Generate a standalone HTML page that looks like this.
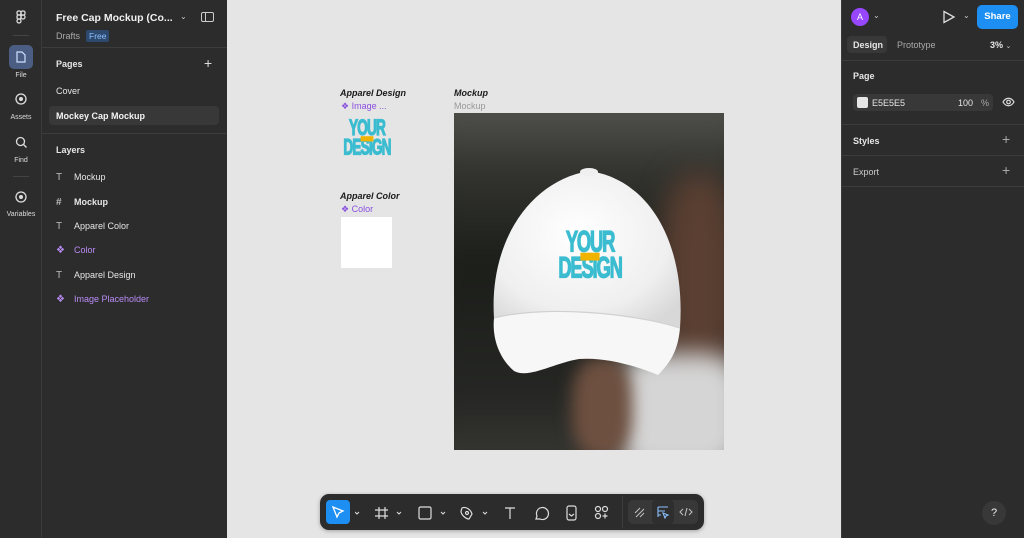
<!DOCTYPE html>
<html><head><style>
*{margin:0;padding:0;box-sizing:border-box}
body{width:1024px;height:538px;overflow:hidden;font-family:"Liberation Sans",sans-serif;background:#e5e5e5;position:relative;font-size:9px;color:#e6e6e6}
.a{position:absolute}
.rail{left:0;top:0;width:42px;height:538px;background:#2c2c2c;border-right:1px solid #3a3a3a}
.lp{left:42px;top:0;width:185px;height:538px;background:#2c2c2c}
.rp{left:841px;top:0;width:183px;height:538px;background:#2c2c2c;border-left:1px solid #3a3a3a}
.sep{height:1px;background:#3c3c3c}
.b{font-weight:bold}
.lbl{font-size:7px;color:#ddd;text-align:center;width:42px;left:0}
.ly{left:56px;font-size:9px}
.ly span{position:absolute;left:18px;top:0;white-space:nowrap}
.ly i{font-style:normal;color:#bbb;font-size:10px}
.purple{color:#b98cf5}
.yd{font-weight:bold;color:#3bbcd0;text-align:center;transform-origin:center top;-webkit-text-stroke:1px #3bbcd0}
</style></head><body>
<div class="a rail"></div>
<svg class="a" style="left:15px;top:10px" width="12" height="16" viewBox="0 0 12 16" fill="none" stroke="#ddd" stroke-width="1.3"><rect x="2" y="1" width="4" height="4" rx="1.5"/><rect x="6" y="1" width="4" height="4" rx="1.5"/><rect x="2" y="5" width="4" height="4" rx="1.5"/><circle cx="8" cy="7" r="2"/><rect x="2" y="9" width="4" height="4" rx="2"/></svg>
<div class="a" style="left:13px;top:35px;width:16px;height:1px;background:#444"></div>
<div class="a" style="left:9px;top:45px;width:24px;height:24px;background:#4b5d82;border-radius:5px"></div>
<svg class="a" style="left:16px;top:51px" width="10" height="12" viewBox="0 0 10 12" fill="none" stroke="#cfe0ff" stroke-width="1.2"><path d="M1 1h5l3 3v7H1z"/></svg>
<div class="a lbl" style="top:72px">File</div>
<svg class="a" style="left:15px;top:93px" width="12" height="12"><circle cx="6" cy="6" r="5" fill="none" stroke="#ddd" stroke-width="1.3"/><circle cx="6" cy="6" r="2" fill="#ddd"/></svg>
<div class="a lbl" style="top:114px">Assets</div>
<svg class="a" style="left:15px;top:136px" width="12" height="12" fill="none" stroke="#ddd" stroke-width="1.3"><circle cx="5.5" cy="5.5" r="4"/><path d="M8.5 8.5l3 3"/></svg>
<div class="a lbl" style="top:157px">Find</div>
<div class="a" style="left:13px;top:176px;width:16px;height:1px;background:#444"></div>
<svg class="a" style="left:15px;top:191px" width="12" height="12"><circle cx="6" cy="6" r="5" fill="none" stroke="#ddd" stroke-width="1.3"/><circle cx="6" cy="6" r="2" fill="#ddd"/></svg>
<div class="a lbl" style="top:211px">Variables</div>

<div class="a lp"></div>
<div class="a b" style="left:56px;top:12px;font-size:10.5px;color:#f0f0f0">Free Cap Mockup (Co...</div>
<div class="a" style="left:180px;top:12px;font-size:8px;color:#ccc">⌄</div>
<div class="a" style="left:201px;top:12px;width:13px;height:10px;border:1.3px solid #ccc;border-radius:2px"><div style="position:absolute;left:3px;top:0;width:1.3px;height:8px;background:#ccc"></div></div>
<div class="a" style="left:56px;top:31px;color:#aaa">Drafts</div>
<div class="a" style="left:86px;top:30px;padding:1px 3px;background:#2d4a6e;color:#8cc0ff;border-radius:2px;font-size:8.5px">Free</div>
<div class="a sep" style="left:42px;top:47px;width:185px"></div>
<div class="a b" style="left:56px;top:59px">Pages</div>
<div class="a" style="left:204px;top:55px;font-size:14px;color:#ddd">+</div>
<div class="a" style="left:56px;top:86px">Cover</div>
<div class="a" style="left:49px;top:106px;width:170px;height:19px;background:#383838;border-radius:4px"></div>
<div class="a b" style="left:56px;top:111px;color:#f4f4f4">Mockey Cap Mockup</div>
<div class="a sep" style="left:42px;top:133px;width:185px"></div>
<div class="a b" style="left:56px;top:145px">Layers</div>
<div class="a ly" style="top:172px"><i>T</i><span>Mockup</span></div>
<div class="a ly b" style="top:197px"><i>#</i><span>Mockup</span></div>
<div class="a ly" style="top:221px"><i>T</i><span>Apparel Color</span></div>
<div class="a ly purple" style="top:245px"><i style="color:#b98cf5">❖</i><span>Color</span></div>
<div class="a ly" style="top:270px"><i>T</i><span>Apparel Design</span></div>
<div class="a ly purple" style="top:294px"><i style="color:#b98cf5">❖</i><span>Image Placeholder</span></div>

<!-- canvas -->
<div class="a b" style="left:340px;top:88px;font-style:italic;color:#1a1a1a">Apparel Design</div>
<div class="a" style="left:341px;top:101px;color:#8a50e0">❖ Image ...</div>
<div class="a yd" style="left:332px;top:118px;width:70px;font-size:17px;line-height:15px;letter-spacing:-1px;transform:scale(0.8,1.3)">YOUR<br>DESIGN<div style="position:absolute;left:27px;top:14px;width:16px;height:4px;background:#f0b400"></div></div>
<div class="a b" style="left:340px;top:191px;font-style:italic;color:#1a1a1a">Apparel Color</div>
<div class="a" style="left:341px;top:204px;color:#8a50e0">❖ Color</div>
<div class="a" style="left:341px;top:217px;width:51px;height:51px;background:#fff"></div>
<div class="a b" style="left:454px;top:88px;font-style:italic;color:#1a1a1a">Mockup</div>
<div class="a" style="left:454px;top:101px;color:#999">Mockup</div>
<div class="a" style="left:454px;top:113px;width:270px;height:337px;overflow:hidden;background:#2a2b27">
<div class="a" style="left:-20px;top:-20px;width:310px;height:380px;filter:blur(14px);background:linear-gradient(#5a5a55 0%,#33342f 20%,#1c1e1a 45%,#262724 80%,#3a3a36 100%)"></div>
<div class="a" style="left:205px;top:60px;width:80px;height:220px;background:#5a3f32;filter:blur(14px);border-radius:40%"></div>
<div class="a" style="left:160px;top:240px;width:130px;height:120px;background:#d5d5d5;filter:blur(12px);border-radius:30%"></div>
<div class="a" style="left:118px;top:245px;width:60px;height:100px;background:#6e5040;filter:blur(8px);border-radius:40%"></div>
<svg class="a" style="left:0;top:0" width="270" height="337">
<defs><radialGradient id="g" cx="45%" cy="40%" r="70%"><stop offset="0" stop-color="#ffffff"/><stop offset="0.7" stop-color="#efefef"/><stop offset="1" stop-color="#d8d8d8"/></radialGradient></defs>
<path d="M40 205 C35 130 75 68 135 58 C195 66 232 130 226 215 C180 200 90 195 40 205Z" fill="url(#g)"/>
<path d="M40 205 C90 192 180 200 226 215 C224 238 216 250 204 262 C180 252 150 244 125 246 C100 250 75 266 60 258 C45 245 38 225 40 205Z" fill="#f7f7f7"/>
<path d="M40 205 C90 192 180 200 226 215" fill="none" stroke="#d0d0d0" stroke-width="1.2"/>
<ellipse cx="135" cy="59" rx="9" ry="4" fill="#f0f0f0"/>
</svg>
<div class="a yd" style="left:91px;top:115px;width:90px;font-size:23px;line-height:20px;letter-spacing:-1.5px;transform:scale(0.8,1.3)">YOUR<br>DESIGN<div style="position:absolute;left:33px;top:19px;width:24px;height:6px;background:#f0b400"></div></div>
</div>

<!-- toolbar -->
<div class="a" style="left:320px;top:494px;width:384px;height:36px;background:#2c2c2c;border-radius:9px;box-shadow:0 1px 4px rgba(0,0,0,.3)"></div>
<div class="a" style="left:326px;top:500px;width:24px;height:24px;background:#1e8ff2;border-radius:4px"></div>
<svg class="a" style="left:331px;top:505px" width="14" height="14" fill="none" stroke="#fff" stroke-width="1.3"><path d="M2 2l10 4-4 2-2 4z"/></svg>
<svg class="a" style="left:355px;top:505px" width="340" height="16" fill="none" stroke="#ddd" stroke-width="1.2">
<path d="M0 7l2 2 2-2M42 7l2 2 2-2M86 7l2 2 2-2M128 7l2 2 2-2" stroke-width="1"/>
<path d="M24 2v12M30 2v12M20 5h13M20 11h13"/>
<rect x="64" y="2" width="12" height="12" rx="1.5"/>
<path d="M107 3c4-2 9 2 10 6l-3 5c-3 0-8-4-8-8z"/><circle cx="112" cy="8" r="1.5"/>
<path d="M150 3h10M155 3v11"/>
<path d="M181 14l1-3a6 6 0 1 1 3 3z"/>
<rect x="212" y="1" width="9" height="14" rx="2"/><path d="M214 9l2.5 2 2.5-2"/>
<circle cx="243" cy="4" r="2.5"/><circle cx="250" cy="4" r="2.5"/><circle cx="243" cy="11" r="2.5"/><path d="M250 8.5v5M247.5 11h5"/>
</svg>
<div class="a" style="left:622px;top:496px;width:1px;height:32px;background:#3c3c3c"></div>
<div class="a" style="left:628px;top:500px;width:70px;height:24px;background:#383838;border-radius:5px"></div>
<div class="a" style="left:652px;top:500px;width:22px;height:24px;background:#2e2e2e;border-radius:4px"></div>
<svg class="a" style="left:633px;top:505px" width="62" height="14" fill="none" stroke="#bbb" stroke-width="1.1">
<path d="M2 8l5-5M3 12l8-8M7 12l4-4"/>
<path d="M25 2h10M25 2v10M25 6h7M25 10h3M30 8l5 2-2 1-1 2z" stroke="#8cc0ff"/>
<path d="M50 4l-3 3 3 3M56 4l3 3-3 3M54 3l-2 8"/>
</svg>

<!-- right panel -->
<div class="a rp"></div>
<div class="a" style="left:851px;top:8px;width:18px;height:18px;border-radius:50%;background:#9747ff;color:#fff;font-size:9px;text-align:center;line-height:18px">A</div>
<div class="a" style="left:873px;top:11px;font-size:8px;color:#ccc">⌄</div>
<svg class="a" style="left:942px;top:10px" width="14" height="14" fill="none" stroke="#ddd" stroke-width="1.3"><path d="M2 1.5l10 5.5-10 5.5z"/></svg>
<div class="a" style="left:963px;top:11px;font-size:8px;color:#ccc">⌄</div>
<div class="a b" style="left:977px;top:5px;width:41px;height:24px;background:#1e8ff2;border-radius:5px;color:#fff;font-size:9.5px;text-align:center;line-height:24px">Share</div>
<div class="a" style="left:847px;top:36px;width:40px;height:17px;background:#383838;border-radius:4px"></div>
<div class="a b" style="left:853px;top:40px">Design</div>
<div class="a" style="left:897px;top:40px;color:#aaa">Prototype</div>
<div class="a b" style="left:990px;top:40px">3% <span style="font-weight:normal;color:#ccc;font-size:7px">⌄</span></div>
<div class="a sep" style="left:842px;top:60px;width:182px"></div>
<div class="a b" style="left:853px;top:71px">Page</div>
<div class="a" style="left:853px;top:94px;width:140px;height:17px;background:#383838;border-radius:4px"></div>
<div class="a" style="left:857px;top:97px;width:11px;height:11px;background:#e5e5e5;border-radius:2px"></div>
<div class="a" style="left:872px;top:98px">E5E5E5</div>
<div class="a" style="left:958px;top:98px">100</div>
<div class="a" style="left:981px;top:98px;color:#aaa">%</div>
<svg class="a" style="left:1002px;top:97px" width="13" height="10" fill="none" stroke="#ddd" stroke-width="1.2"><path d="M1 5c3-5 8-5 11 0c-3 5-8 5-11 0z"/><circle cx="6.5" cy="5" r="1.8"/></svg>
<div class="a sep" style="left:842px;top:124px;width:182px"></div>
<div class="a b" style="left:853px;top:136px">Styles</div>
<div class="a" style="left:1002px;top:131px;font-size:14px;color:#aaa">+</div>
<div class="a sep" style="left:842px;top:155px;width:182px"></div>
<div class="a" style="left:853px;top:167px;color:#ccc">Export</div>
<div class="a" style="left:1002px;top:162px;font-size:14px;color:#aaa">+</div>
<div class="a sep" style="left:842px;top:186px;width:182px"></div>
<div class="a" style="left:982px;top:501px;width:24px;height:24px;border-radius:50%;background:#383838;color:#eee;font-size:11px;text-align:center;line-height:24px">?</div>
</body></html>
